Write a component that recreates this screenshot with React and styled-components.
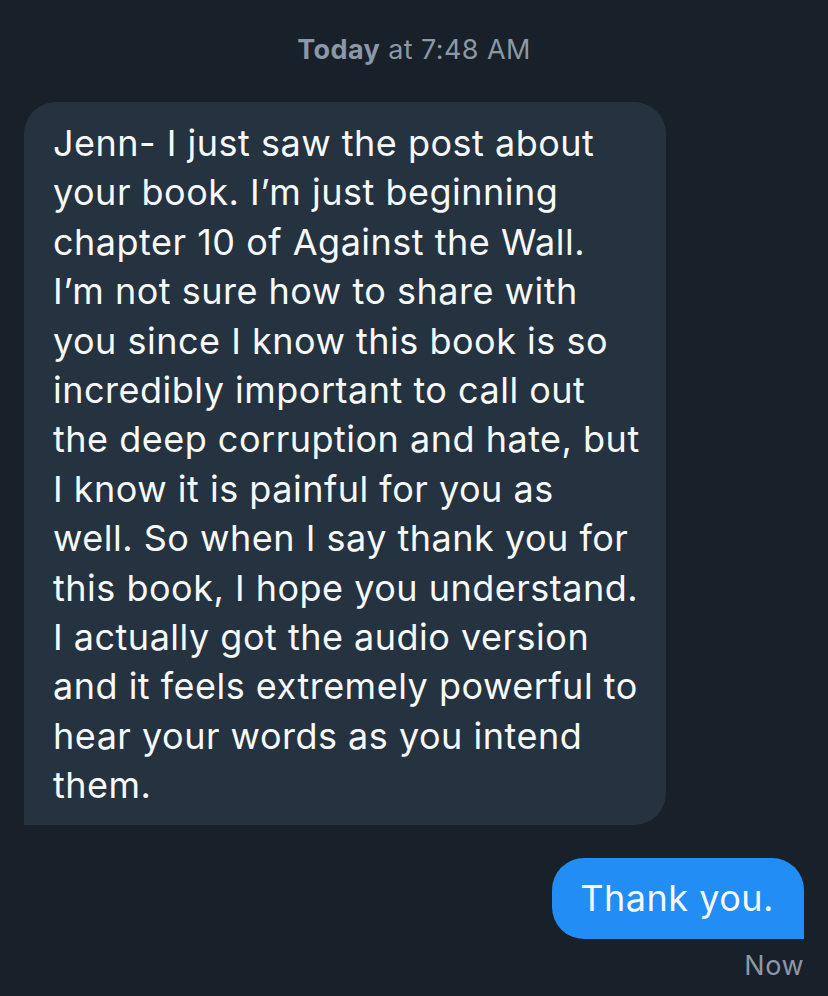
import React from 'react';
import styled, { createGlobalStyle } from 'styled-components';

const GlobalStyle = createGlobalStyle`
  html, body {
    margin: 0;
    padding: 0;
    background: #18202a;
  }
  body {
    font-family: Inter, "Noto Sans", sans-serif;
    -webkit-font-smoothing: antialiased;
  }
`;

const Thread = styled.div`
  width: 828px;
  height: 996px;
  box-sizing: border-box;
  padding: 33px 24px 0 24px;
  display: flex;
  flex-direction: column;
  overflow: hidden;
`;

const Stamp = styled.div`
  text-align: center;
  color: #8b98a5;
  font-size: 27px;
  line-height: 34px;
  letter-spacing: 0.4px;
  margin-bottom: 35px;

  b {
    font-weight: 700;
  }
`;

const Row = styled.div`
  display: flex;
  justify-content: ${(p) => (p.$mine ? 'flex-end' : 'flex-start')};
  margin-top: ${(p) => (p.$mine ? '33px' : '0')};
`;

const Bubble = styled.div`
  box-sizing: border-box;
  width: ${(p) => (p.$mine ? 'auto' : '642px')};
  padding: ${(p) => (p.$mine ? '15px 30px 16px 28px' : '17px 10px 14px 29px')};
  border-radius: 32px;
  border-bottom-left-radius: ${(p) => (p.$mine ? '32px' : '0')};
  border-bottom-right-radius: ${(p) => (p.$mine ? '0' : '32px')};
  background: ${(p) => (p.$mine ? '#218df5' : '#253341')};
  color: #f7f9f9;
  font-size: 36px;
  line-height: ${(p) => (p.$mine ? '50px' : '49.4px')};
  letter-spacing: 0.5px;
`;

const Line = styled.div`
  white-space: nowrap;
`;

const Meta = styled.div`
  text-align: right;
  color: #8b98a5;
  font-size: 27px;
  line-height: 34px;
  letter-spacing: 0.5px;
  margin-top: 10px;
`;

const incoming = [
  'Jenn- I just saw the post about',
  'your book. I\u2019m just beginning',
  'chapter 10 of Against the Wall.',
  'I\u2019m not sure how to share with',
  'you since I know this book is so',
  'incredibly important to call out',
  'the deep corruption and hate, but',
  'I know it is painful for you as',
  'well. So when I say thank you for',
  'this book, I hope you understand.',
  'I actually got the audio version',
  'and it feels extremely powerful to',
  'hear your words as you intend',
  'them.',
];

export default function App() {
  return (
    <>
      <GlobalStyle />
      <Thread>
        <Stamp>
          <b>Today</b> at 7:48 AM
        </Stamp>
        <Row>
          <Bubble>
            {incoming.map((l) => (
              <Line key={l}>{l}</Line>
            ))}
          </Bubble>
        </Row>
        <Row $mine>
          <Bubble $mine>Thank you.</Bubble>
        </Row>
        <Meta>Now</Meta>
      </Thread>
    </>
  );
}
